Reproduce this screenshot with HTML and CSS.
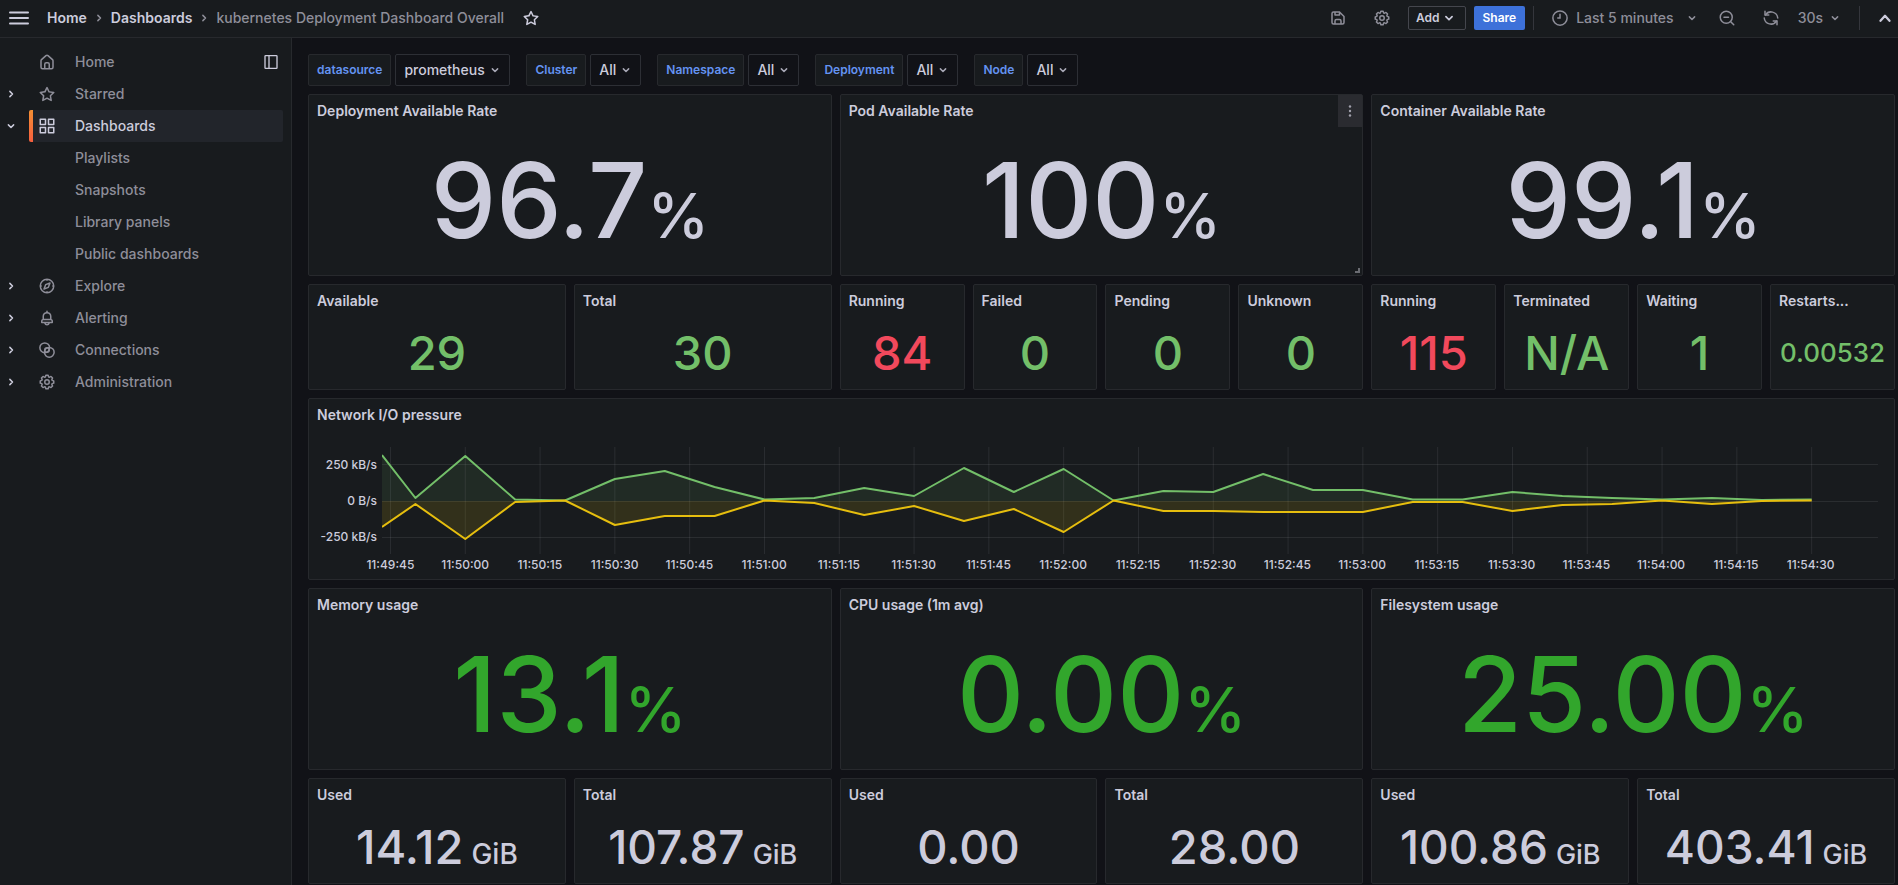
FILE: index.html
```html
<!DOCTYPE html>
<html lang="en">
<head>
<meta charset="utf-8">
<title>kubernetes Deployment Dashboard Overall</title>
<link rel="stylesheet" href="styles.css">
</head>
<body>
<svg class="sprite" aria-hidden="true">
  <symbol id="i-star" viewBox="0 0 24 24"><path fill="currentColor" d="M22,9.67A1,1,0,0,0,21.14,9l-5.69-.83L12.9,3a1,1,0,0,0-1.8,0L8.55,8.16,2.86,9a1,1,0,0,0-.81.68,1,1,0,0,0,.25,1l4.13,4-1,5.68A1,1,0,0,0,6.9,21.44L12,18.77l5.1,2.67a.93.93,0,0,0,.46.12,1,1,0,0,0,.59-.19,1,1,0,0,0,.4-1l-1-5.68,4.13-4A1,1,0,0,0,22,9.67Zm-6.15,4a1,1,0,0,0-.29.88l.72,4.2-3.76-2a1.06,1.06,0,0,0-.94,0l-3.76,2,.72-4.2a1,1,0,0,0-.29-.88l-3-3,4.21-.61a1,1,0,0,0,.76-.55L12,5.7l1.88,3.82a1,1,0,0,0,.76.55l4.21.61Z"/></symbol>
  <symbol id="i-cog" viewBox="0 0 24 24"><path fill="currentColor" d="M21.32,9.55l-1.89-.63.89-1.78A1,1,0,0,0,20.13,6L18,3.87a1,1,0,0,0-1.15-.19l-1.78.89-.63-1.89A1,1,0,0,0,13.5,2h-3a1,1,0,0,0-.95.68L8.92,4.57,7.14,3.68A1,1,0,0,0,6,3.87L3.87,6a1,1,0,0,0-.19,1.15l.89,1.78-1.89.63A1,1,0,0,0,2,10.5v3a1,1,0,0,0,.68.95l1.89.63-.89,1.78A1,1,0,0,0,3.87,18L6,20.13a1,1,0,0,0,1.15.19l1.78-.89.63,1.89a1,1,0,0,0,.95.68h3a1,1,0,0,0,.95-.68l.63-1.89,1.78.89A1,1,0,0,0,18,20.13L20.13,18a1,1,0,0,0,.19-1.15l-.89-1.78,1.89-.63A1,1,0,0,0,22,13.5v-3A1,1,0,0,0,21.32,9.55ZM20,12.78l-1.2.4A2,2,0,0,0,17.64,16l.57,1.14-1.1,1.1L16,17.64a2,2,0,0,0-2.79,1.16l-.4,1.2H11.22l-.4-1.2A2,2,0,0,0,8,17.64l-1.14.57-1.1-1.1L6.36,16A2,2,0,0,0,5.2,13.18L4,12.78V11.22l1.2-.4A2,2,0,0,0,6.36,8L5.79,6.89l1.1-1.1L8,6.36A2,2,0,0,0,10.82,5.2l.4-1.2h1.56l.4,1.2A2,2,0,0,0,16,6.36l1.14-.57,1.1,1.1L17.64,8a2,2,0,0,0,1.16,2.79l1.2.4ZM12,8a4,4,0,1,0,4,4A4,4,0,0,0,12,8Zm0,6a2,2,0,1,1,2-2A2,2,0,0,1,12,14Z"/></symbol>
  <symbol id="i-bell" viewBox="0 0 24 24"><path fill="currentColor" d="M18,13.18V10a6,6,0,0,0-5-5.91V3a1,1,0,0,0-2,0V4.09A6,6,0,0,0,6,10v3.18A3,3,0,0,0,4,16v2a1,1,0,0,0,1,1H8.14a4,4,0,0,0,7.72,0H19a1,1,0,0,0,1-1V16A3,3,0,0,0,18,13.18ZM8,10a4,4,0,0,1,8,0v3H8Zm4,10a2,2,0,0,1-1.72-1h3.44A2,2,0,0,1,12,20Zm6-3H6V16a1,1,0,0,1,1-1H17a1,1,0,0,1,1,1Z"/></symbol>
  <symbol id="i-home" viewBox="0 0 24 24"><path fill="currentColor" d="M20,8h0L14,2.74a3,3,0,0,0-4,0L4,8a3,3,0,0,0-1,2.26V19a3,3,0,0,0,3,3H18a3,3,0,0,0,3-3V10.25A3,3,0,0,0,20,8ZM14,20H10V15a1,1,0,0,1,1-1h2a1,1,0,0,1,1,1Zm5-1a1,1,0,0,1-1,1H16V15a3,3,0,0,0-3-3H11a3,3,0,0,0-3,3v5H6a1,1,0,0,1-1-1V10.25a1,1,0,0,1,.34-.75l6-5.25a1,1,0,0,1,1.32,0l6,5.25a1,1,0,0,1,.34.75Z"/></symbol>
  <symbol id="i-save" viewBox="0 0 24 24"><path fill="currentColor" d="M20.71,9.29l-6-6a1,1,0,0,0-.32-.21A1.09,1.09,0,0,0,14,3H6A3,3,0,0,0,3,6V18a3,3,0,0,0,3,3H18a3,3,0,0,0,3-3V10A1,1,0,0,0,20.71,9.29ZM9,5h4V7H9Zm6,14H9V16a1,1,0,0,1,1-1h4a1,1,0,0,1,1,1Zm4-1a1,1,0,0,1-1,1H17V16a3,3,0,0,0-3-3H10a3,3,0,0,0-3,3v3H6a1,1,0,0,1-1-1V6A1,1,0,0,1,6,5H7V8A1,1,0,0,0,8,9h6a1,1,0,0,0,1-1V6.41l4,4Z"/></symbol>
  <symbol id="i-apps" viewBox="0 0 24 24"><g fill="none" stroke="currentColor" stroke-width="2" stroke-linejoin="round"><rect x="3" y="3" width="7" height="7"/><rect x="14" y="3" width="7" height="7"/><rect x="3" y="14" width="7" height="7"/><rect x="14" y="14" width="7" height="7"/></g></symbol>
  <symbol id="i-compass" viewBox="0 0 24 24"><g fill="none" stroke="currentColor" stroke-width="2" stroke-linejoin="round"><circle cx="12" cy="12" r="9"/><path d="M16 8l-2.200 5.800L8 16l2.200-5.800z"/><path d="M12 3v2M12 19v2M3 12h2M19 12h2"/></g></symbol>
  <symbol id="i-rings" viewBox="0 0 24 24"><g fill="none" stroke="currentColor" stroke-width="2"><circle cx="9" cy="9" r="6.500"/><circle cx="15" cy="15" r="6.500"/><circle cx="12" cy="12" r="3"/></g></symbol>
  <symbol id="i-dock" viewBox="0 0 24 24"><g fill="none" stroke="currentColor" stroke-width="2"><rect x="3" y="2.500" width="18" height="19" rx="1"/><path d="M9 3v18"/></g></symbol>
  <symbol id="i-clock" viewBox="0 0 24 24"><g fill="none" stroke="currentColor" stroke-width="2" stroke-linecap="round"><circle cx="12" cy="12" r="9.500"/><path d="M12 7v5H9"/></g></symbol>
  <symbol id="i-zoomout" viewBox="0 0 24 24"><g fill="none" stroke="currentColor" stroke-width="2" stroke-linecap="round"><circle cx="11" cy="11" r="8"/><path d="M8 11h6M17 17l4 4"/></g></symbol>
  <symbol id="i-sync" viewBox="0 0 24 24"><g fill="none" stroke="currentColor" stroke-width="2" stroke-linecap="round" stroke-linejoin="round"><path d="M4 3v5h5"/><path d="M4.500 8A9 9 0 0 1 21 12"/><path d="M20 21v-5h-5"/><path d="M19.500 16A9 9 0 0 1 3 12"/></g></symbol>
  <symbol id="i-down" viewBox="0 0 16 16"><path fill="none" stroke="currentColor" stroke-width="2" stroke-linecap="round" stroke-linejoin="round" d="M4.500 6.500L8 10l3.500-3.500"/></symbol>
  <symbol id="i-up" viewBox="0 0 16 16"><path fill="none" stroke="currentColor" stroke-width="2" stroke-linecap="round" stroke-linejoin="round" d="M4 10.500L8 6l4 4.500"/></symbol>
  <symbol id="i-right" viewBox="0 0 16 16"><path fill="none" stroke="currentColor" stroke-width="2" stroke-linecap="round" stroke-linejoin="round" d="M6.500 4.500L10 8l-3.500 3.500"/></symbol>
  <symbol id="i-menu" viewBox="0 0 20 14"><path fill="none" stroke="currentColor" stroke-width="2" stroke-linecap="round" d="M1 1.500h18M1 7h18M1 12.500h18"/></symbol>
  <symbol id="i-dots" viewBox="0 0 16 16"><g fill="currentColor"><circle cx="8" cy="3.500" r="1.200"/><circle cx="8" cy="8" r="1.200"/><circle cx="8" cy="12.500" r="1.200"/></g></symbol>
</svg>

<header class="topbar">
  <button class="icon-btn menu-btn" aria-label="Toggle menu"><svg class="menu-icon"><use href="#i-menu"/></svg></button>
  <nav class="crumbs" aria-label="Breadcrumbs">
    <a class="crumb" href="#">Home</a>
    <svg class="ico-s"><use href="#i-right"/></svg>
    <a class="crumb" href="#">Dashboards</a>
    <svg class="ico-s"><use href="#i-right"/></svg>
    <span class="crumb-current">kubernetes Deployment Dashboard Overall</span>
  </nav>
  <button class="icon-btn star-btn" aria-label="Mark as favorite"><svg class="ico"><use href="#i-star"/></svg></button>
  <div class="tools">
    <button class="icon-btn tool" aria-label="Save dashboard"><svg class="ico"><use href="#i-save"/></svg></button>
    <button class="icon-btn tool" aria-label="Dashboard settings"><svg class="ico"><use href="#i-cog"/></svg></button>
    <button class="btn btn-outline">Add<svg class="ico-m"><use href="#i-down"/></svg></button>
    <button class="btn btn-primary">Share</button>
    <span class="divider"></span>
    <button class="text-btn range"><svg class="ico"><use href="#i-clock"/></svg><span class="range-text">Last 5 minutes</span><svg class="ico-s"><use href="#i-down"/></svg></button>
    <button class="icon-btn tool" aria-label="Zoom out"><svg class="ico"><use href="#i-zoomout"/></svg></button>
    <button class="icon-btn tool" aria-label="Refresh"><svg class="ico"><use href="#i-sync"/></svg></button>
    <button class="text-btn interval">30s<svg class="ico-s"><use href="#i-down"/></svg></button>
    <span class="divider"></span>
    <button class="icon-btn collapse" aria-label="Collapse toolbar"><svg class="ico"><use href="#i-up"/></svg></button>
  </div>
</header>

<div class="shell">
  <nav class="sidebar" aria-label="Main">
    <ul class="nav">
      <li class="nav-row"><span class="twist"></span><a class="nav-link" href="#"><svg class="ico"><use href="#i-home"/></svg><span>Home</span></a><button class="icon-btn dock" aria-label="Undock menu"><svg class="ico-dock"><use href="#i-dock"/></svg></button></li>
      <li class="nav-row"><button class="twist" aria-label="Expand Starred"><svg class="ico-s"><use href="#i-right"/></svg></button><a class="nav-link" href="#"><svg class="ico"><use href="#i-star"/></svg><span>Starred</span></a></li>
      <li class="nav-row"><button class="twist" aria-label="Collapse Dashboards"><svg class="ico-s"><use href="#i-down"/></svg></button><a class="nav-link active" href="#"><svg class="ico"><use href="#i-apps"/></svg><span>Dashboards</span></a></li>
      <li class="nav-row sub"><a class="nav-link" href="#">Playlists</a></li>
      <li class="nav-row sub"><a class="nav-link" href="#">Snapshots</a></li>
      <li class="nav-row sub"><a class="nav-link" href="#">Library panels</a></li>
      <li class="nav-row sub"><a class="nav-link" href="#">Public dashboards</a></li>
      <li class="nav-row"><button class="twist" aria-label="Expand Explore"><svg class="ico-s"><use href="#i-right"/></svg></button><a class="nav-link" href="#"><svg class="ico"><use href="#i-compass"/></svg><span>Explore</span></a></li>
      <li class="nav-row"><button class="twist" aria-label="Expand Alerting"><svg class="ico-s"><use href="#i-right"/></svg></button><a class="nav-link" href="#"><svg class="ico"><use href="#i-bell"/></svg><span>Alerting</span></a></li>
      <li class="nav-row"><button class="twist" aria-label="Expand Connections"><svg class="ico-s"><use href="#i-right"/></svg></button><a class="nav-link" href="#"><svg class="ico"><use href="#i-rings"/></svg><span>Connections</span></a></li>
      <li class="nav-row"><button class="twist" aria-label="Expand Administration"><svg class="ico-s"><use href="#i-right"/></svg></button><a class="nav-link" href="#"><svg class="ico"><use href="#i-cog"/></svg><span>Administration</span></a></li>
    </ul>
  </nav>

  <main class="content">
    <form class="variables">
      <div class="var"><label class="var-label" for="v-ds">datasource</label><span class="var-box"><select class="var-select" id="v-ds"><option>prometheus</option></select><svg class="ico-s"><use href="#i-down"/></svg></span></div>
      <div class="var"><label class="var-label" for="v-cl">Cluster</label><span class="var-box"><select class="var-select" id="v-cl"><option>All</option></select><svg class="ico-s"><use href="#i-down"/></svg></span></div>
      <div class="var"><label class="var-label" for="v-ns">Namespace</label><span class="var-box"><select class="var-select" id="v-ns"><option>All</option></select><svg class="ico-s"><use href="#i-down"/></svg></span></div>
      <div class="var"><label class="var-label" for="v-dp">Deployment</label><span class="var-box"><select class="var-select" id="v-dp"><option>All</option></select><svg class="ico-s"><use href="#i-down"/></svg></span></div>
      <div class="var"><label class="var-label" for="v-nd">Node</label><span class="var-box"><select class="var-select" id="v-nd"><option>All</option></select><svg class="ico-s"><use href="#i-down"/></svg></span></div>
    </form>

    <div class="grid">
      <section class="panel w8 h5"><h2 class="title">Deployment Available Rate</h2><p class="stat big">96.7<span class="unit">%</span></p></section>
      <section class="panel w8 h5"><h2 class="title">Pod Available Rate</h2><p class="stat big">100<span class="unit">%</span></p>
        <button class="panel-menu" aria-label="Panel menu"><svg class="ico"><use href="#i-dots"/></svg></button><span class="resize"></span></section>
      <section class="panel w8 h5"><h2 class="title">Container Available Rate</h2><p class="stat big">99.1<span class="unit">%</span></p></section>

      <section class="panel w4 h3"><h2 class="title">Available</h2><p class="stat green">29</p></section>
      <section class="panel w4 h3"><h2 class="title">Total</h2><p class="stat green">30</p></section>
      <section class="panel w2 h3"><h2 class="title">Running</h2><p class="stat red">84</p></section>
      <section class="panel w2 h3"><h2 class="title">Failed</h2><p class="stat green">0</p></section>
      <section class="panel w2 h3"><h2 class="title">Pending</h2><p class="stat green">0</p></section>
      <section class="panel w2 h3"><h2 class="title">Unknown</h2><p class="stat green">0</p></section>
      <section class="panel w2 h3"><h2 class="title">Running</h2><p class="stat red">115</p></section>
      <section class="panel w2 h3"><h2 class="title">Terminated</h2><p class="stat green">N/A</p></section>
      <section class="panel w2 h3"><h2 class="title">Waiting</h2><p class="stat green">1</p></section>
      <section class="panel w2 h3"><h2 class="title">Restarts...</h2><p class="stat small green">0.00532</p></section>

      <section class="panel w24 h5">
        <h2 class="title">Network I/O pressure</h2>
        <div class="chart">
          <div class="y-axis"><span>250 kB/s</span><span>0 B/s</span><span>-250 kB/s</span></div>
          <svg class="plot" viewBox="-6.7 0 300 108" preserveAspectRatio="none" role="img" aria-label="Network receive and transmit rates">
            <path class="gridline" d="M-6.700 17.500H293.300M-6.700 54.500H293.300M-6.700 90.500H293.300M-5 0V107M10 0V107M25 0V107M40 0V107M55 0V107M70 0V107M85 0V107M100 0V107M115 0V107M130 0V107M145 0V107M160 0V107M175 0V107M190 0V107M205 0V107M220 0V107M235 0V107M250 0V107M265 0V107M280 0V107"/>
            <path class="area-rx" d="M-6.700 54V8L0 51 10 9 20 52.500 30 53.500 40 32 50 24 60 40 70 52.500 80 51 90 41 100 49 110 21 120 45 130 22 140 53.500 150 44 160 45 170 27 180 43 190 43 200 52.500 210 52.500 220 45 230 49 240 51 250 52.500 260 51 270 53 280 52.500V54z"/>
            <path class="area-tx" d="M-6.700 54V80L0 57 10 92 20 55 30 53.500 40 78 50 69 60 69 70 53.500 80 56 90 68 100 59 110 74 120 62 130 85 140 53.500 150 64 160 64 170 65 180 65 190 65 200 55 210 55 220 64 230 58 240 57 250 53.500 260 57 270 54 280 53.500V54z"/>
            <path class="line-rx" d="M-6.700 8L0 51 10 9 20 52.500 30 53.500 40 32 50 24 60 40 70 52.500 80 51 90 41 100 49 110 21 120 45 130 22 140 53.500 150 44 160 45 170 27 180 43 190 43 200 52.500 210 52.500 220 45 230 49 240 51 250 52.500 260 51 270 53 280 52.500"/>
            <path class="line-tx" d="M-6.700 80L0 57 10 92 20 55 30 53.500 40 78 50 69 60 69 70 53.500 80 56 90 68 100 59 110 74 120 62 130 85 140 53.500 150 64 160 64 170 65 180 65 190 65 200 55 210 55 220 64 230 58 240 57 250 53.500 260 57 270 54 280 53.500"/>
          </svg>
          <div class="x-axis"><span>11:49:45</span><span>11:50:00</span><span>11:50:15</span><span>11:50:30</span><span>11:50:45</span><span>11:51:00</span><span>11:51:15</span><span>11:51:30</span><span>11:51:45</span><span>11:52:00</span><span>11:52:15</span><span>11:52:30</span><span>11:52:45</span><span>11:53:00</span><span>11:53:15</span><span>11:53:30</span><span>11:53:45</span><span>11:54:00</span><span>11:54:15</span><span>11:54:30</span></div>
        </div>
      </section>

      <section class="panel w8 h5"><h2 class="title">Memory usage</h2><p class="stat big deep">13.1<span class="unit">%</span></p></section>
      <section class="panel w8 h5"><h2 class="title">CPU usage (1m avg)</h2><p class="stat big deep">0.00<span class="unit">%</span></p></section>
      <section class="panel w8 h5"><h2 class="title">Filesystem usage</h2><p class="stat big deep">25.00<span class="unit">%</span></p></section>

      <section class="panel w4 h3"><h2 class="title">Used</h2><p class="stat">14.12<span class="unit suffix">GiB</span></p></section>
      <section class="panel w4 h3"><h2 class="title">Total</h2><p class="stat fitted">107.87<span class="unit suffix">GiB</span></p></section>
      <section class="panel w4 h3"><h2 class="title">Used</h2><p class="stat">0.00</p></section>
      <section class="panel w4 h3"><h2 class="title">Total</h2><p class="stat">28.00</p></section>
      <section class="panel w4 h3"><h2 class="title">Used</h2><p class="stat fitted">100.86<span class="unit suffix">GiB</span></p></section>
      <section class="panel w4 h3"><h2 class="title">Total</h2><p class="stat fitted">403.41<span class="unit suffix">GiB</span></p></section>
    </div>
  </main>
</div>
</body>
</html>
```
FILE: styles.css
```css
:root {
  --canvas: #111217;
  --surface: #181b1e;
  --border: #27292d;
  --text: #ccccdc;
  --muted: #8e8e99;
  --blue: #6493f2;
}

* { box-sizing: border-box; }

body {
  margin: 0;
  min-height: 100vh;
  display: flex;
  flex-direction: column;
  background: var(--canvas);
  color: var(--text);
  font: 500 14px/22px Inter, "Liberation Sans", sans-serif;
}

a { color: inherit; text-decoration: none; }

button,
select {
  font: inherit;
  color: inherit;
  background: none;
  border: 0;
  padding: 0;
  margin: 0;
}

.sprite { display: none; }
.ico { width: 18px; height: 18px; flex: none; display: block; }
.ico-dock { width: 16px; height: 16px; flex: none; display: block; }
.ico-m { width: 14px; height: 14px; flex: none; display: block; }
.ico-s { width: 12px; height: 12px; flex: none; display: block; }

.icon-btn { display: flex; align-items: center; justify-content: center; }

/* top bar */
.topbar {
  display: flex;
  align-items: center;
  height: 38px;
  padding: 0 0 2px 9px;
  background: var(--surface);
  border-bottom: 1px solid var(--border);
}

.menu-btn { color: var(--text); }
.menu-icon { width: 20px; height: 14px; display: block; }

.crumbs { display: flex; align-items: center; gap: 6px; margin-left: 18px; }
.crumbs .ico-s { color: var(--muted); }
.crumb { font-weight: 600; }
.crumb-current { color: var(--muted); }
.star-btn { margin-left: 18px; }

.tools { display: flex; align-items: center; margin-left: auto; color: var(--muted); }
.tool { width: 44px; height: 24px; }

.btn {
  display: flex;
  align-items: center;
  height: 24px;
  border-radius: 2px;
  font-size: 12px;
  font-weight: 600;
}
.btn-outline { color: var(--text); border: 1px solid #44464d; padding: 0 9px 0 7px; gap: 2px; margin-left: 4px; }
.btn-primary { background: #3d71d9; color: #fff; padding: 0 9px; margin-left: 8px; }

.divider { width: 1px; height: 24px; background: #34363c; margin: 0 0 0 8px; }
.text-btn { display: flex; align-items: center; height: 24px; }
.range { padding: 0 7px 0 17px; }
.range-text { margin: 0 12px 0 7px; }
.interval { gap: 6px; padding: 0 10px 0 5px; }
.collapse { width: 38px; height: 24px; padding-left: 12px; color: var(--text); }

/* layout */
.shell { display: flex; flex: 1; }

.sidebar {
  flex: none;
  width: 292px;
  background: var(--surface);
  border-right: 1px solid var(--border);
}

.nav { list-style: none; margin: 0; padding: 8px 8px 0 5px; }
.nav-row { display: flex; align-items: center; height: 32px; color: var(--muted); }
.twist { width: 24px; flex: none; color: var(--text); display: flex; }
.nav-link {
  flex: 1;
  display: flex;
  align-items: center;
  gap: 19px;
  height: 32px;
  padding-left: 9px;
  border-radius: 2px;
}
.nav-link.active {
  color: var(--text);
  background: linear-gradient(#f58f34, #f55f3e) left / 4px 100% no-repeat, #22252b;
}
.sub { padding-left: 24px; }
.sub .nav-link { padding-left: 46px; }
.dock { width: 24px; height: 32px; color: var(--text); }

.content { flex: 1; min-width: 0; padding: 16px 3px 1px 16px; }

/* variables */
.variables { display: flex; flex-wrap: wrap; gap: 8px 16px; margin-bottom: 8px; }
.var { display: flex; gap: 4px; }
.var-label {
  display: flex;
  align-items: center;
  height: 32px;
  padding: 0 8px;
  border: 1px solid var(--border);
  border-radius: 2px;
  background: var(--surface);
  color: var(--blue);
  font-size: 12px;
  font-weight: 600;
}
.var-box {
  display: flex;
  align-items: center;
  gap: 4px;
  height: 32px;
  padding: 0 8px;
  border: 1px solid #2d2f35;
  border-radius: 2px;
}
.var-select { appearance: none; height: 30px; }
.var-box .ico-s { color: #a8a8b6; }

/* panels */
.grid {
  display: grid;
  grid-template-columns: repeat(24, minmax(0, 1fr));
  grid-auto-rows: minmax(30px, auto);
  gap: 8px;
}
.w2 { grid-column: span 2; }
.w4 { grid-column: span 4; }
.w8 { grid-column: span 8; }
.w24 { grid-column: span 24; }
.h3 { grid-row: span 3; }
.h5 { grid-row: span 5; }

.panel {
  position: relative;
  display: flex;
  flex-direction: column;
  min-width: 0;
  background: var(--surface);
  border: 1px solid var(--border);
  border-radius: 2px;
}
.title {
  margin: 0;
  padding: 0 8px;
  font-size: 14px;
  font-weight: 600;
  line-height: 32px;
  white-space: nowrap;
}

.stat {
  flex: 1;
  display: flex;
  align-items: baseline;
  align-content: center;
  justify-content: center;
  flex-wrap: wrap;
  margin: 0;
  padding-bottom: 1px;
  font-size: 47px;
  font-weight: 500;
  line-height: 56px;
}
.unit { font-size: 28px; line-height: 1; }
.suffix { margin-left: 8px; }
.fitted { font-size: 46px; }
.fitted .unit { font-size: 27px; }
.big { font-size: 104px; line-height: 124px; padding-bottom: 2px; }
.big .unit { font-size: 62px; }
.small { font-size: 26px; line-height: 32px; }
.green { color: #73bf69; }
.deep { color: #32a62c; }
.red { color: #f2495c; }

.panel-menu {
  position: absolute;
  top: 0;
  right: 0;
  display: flex;
  align-items: center;
  justify-content: center;
  width: 24px;
  height: 32px;
  color: #a0a0ac;
  background: #2a2b30;
}
.panel-menu .ico { width: 16px; height: 16px; }
.resize {
  position: absolute;
  right: 2px;
  bottom: 2px;
  width: 5px;
  height: 5px;
  border: solid #6a6c72;
  border-width: 0 2px 2px 0;
}

/* time series */
.chart {
  display: grid;
  grid-template-columns: 73px minmax(0, 1fr);
  padding: 16px 16px 0 0;
  font-size: 12px;
}
.y-axis { display: flex; flex-direction: column; line-height: 36px; padding-right: 5px; text-align: right; }
.plot { width: 100%; height: 108px; display: block; }
.plot path { vector-effect: non-scaling-stroke; fill: none; stroke-linejoin: round; }
.plot .gridline { stroke: rgba(204, 204, 220, 0.1); stroke-width: 1; }
.plot .area-rx { fill: rgba(115, 191, 105, 0.1); }
.plot .area-tx { fill: rgba(242, 204, 12, 0.12); }
.plot .line-rx { stroke: #73bf69; stroke-width: 2; }
.plot .line-tx { stroke: #e6be0e; stroke-width: 2; }
.x-axis {
  grid-column: 1 / -1;
  display: grid;
  grid-template-columns: repeat(20, minmax(0, 1fr));
  margin: 0 30px 0 44px;
  line-height: 20px;
  text-align: center;
}
```
